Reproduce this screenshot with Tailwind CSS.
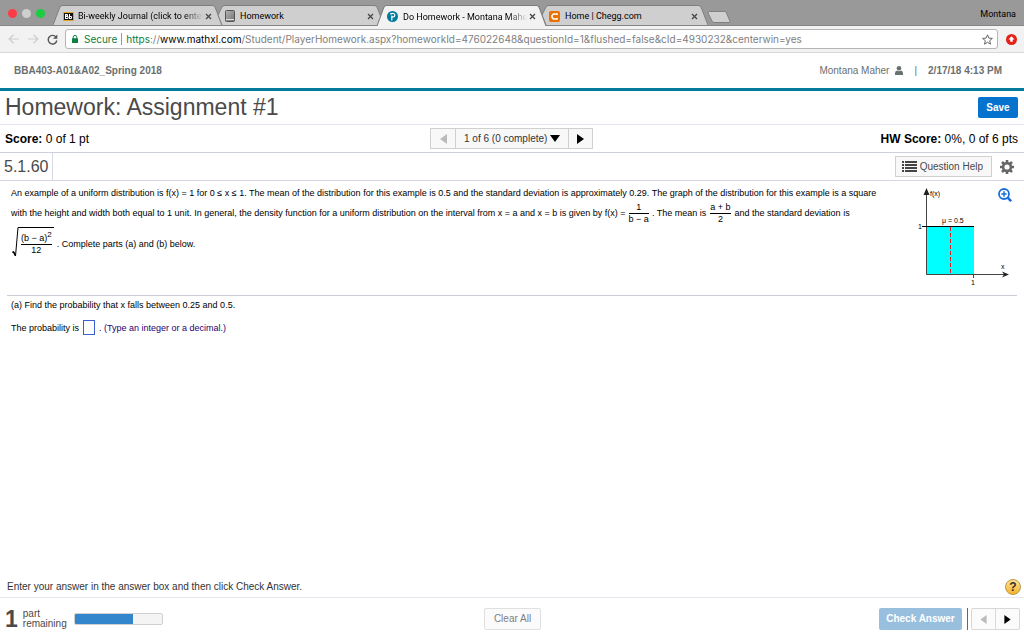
<!DOCTYPE html>
<html lang="en">
<head>
    <meta charset="UTF-8">
    <meta name="viewport" content="width=device-width, initial-scale=1.0">
    <title>Do Homework - Montana Maher</title>
    <script src="https://cdn.jsdelivr.net/npm/@tailwindcss/browser@4"></script>
</head>
<body class="flex flex-col min-h-screen bg-white text-black text-[10px] leading-[14px] font-['Liberation_Sans',Arial,sans-serif]">

    <!-- Tab strip -->
    <div class="flex items-end h-[26px] shrink-0 bg-[#999999] border-b border-[#858585] text-[9px] font-[Roboto,sans-serif]">
        <div class="flex items-center gap-[5px] self-center w-[53px] pl-2 pt-[2px] shrink-0">
            <span class="size-[9px] rounded-full bg-[#fc3b47]"></span>
            <span class="size-[9px] rounded-full bg-[#cfcfcf]"></span>
            <span class="size-[9px] rounded-full bg-[#19cf40]"></span>
        </div>
        <div class="relative flex items-center w-[169px] h-5 pt-[2px] pl-[10px] pr-[8px] shrink-0">
            <svg class="absolute inset-0 size-full" viewBox="0 0 170 20" preserveAspectRatio="none"><path d="M0 20 L7 2 Q8 .5 10 .5 H160 Q162 .5 163 2 L170 20" fill="#cfcfcf" stroke="#7d7d7d"/></svg>
            <svg class="relative w-[11px] h-[9px] shrink-0" viewBox="0 0 11 9"><rect width="11" height="9" fill="#e5a52d"/><rect x="1" y="1" width="9" height="7" fill="#111"/><path d="M2.500 2v5M2.500 2.500h2v1.500h-2M2.500 6.500h2.500V4.500H2.500M6.500 2v5M6.500 4.500h2v2h-2" stroke="#fff" fill="none"/></svg>
            <span class="relative flex-1 ml-[4px] whitespace-nowrap overflow-hidden mask-r-from-85%">Bi-weekly Journal (click to enter)</span>
            <button aria-label="Close tab" class="relative shrink-0 mx-[2px]"><svg class="size-[7px]" viewBox="0 0 7 7"><path d="M1 1l5 5M6 1l-5 5" stroke="#444" stroke-width="1.200"/></svg></button>
        </div>
        <div class="relative flex items-center w-[169px] h-5 pt-[2px] pl-[10px] pr-[8px] -ml-[7px] shrink-0">
            <svg class="absolute inset-0 size-full" viewBox="0 0 170 20" preserveAspectRatio="none"><path d="M3 10 L7 2 Q8 .5 10 .5 H160 Q162 .5 163 2 L170 20 H7 Z" fill="#cfcfcf"/><path d="M7 20 L3 10 L7 2 Q8 .5 10 .5 H160 Q162 .5 163 2 L170 20" fill="none" stroke="#7d7d7d"/></svg>
            <svg class="relative w-[10px] h-[12px] shrink-0" viewBox="0 0 10 12"><defs><linearGradient id="page" x2="1" y2="1"><stop stop-color="#b5b5b5"/><stop offset="1" stop-color="#707070"/></linearGradient></defs><rect x=".5" y=".5" width="9" height="11" rx="1" fill="url(#page)" stroke="#555"/><path d="M1 9.500h8" stroke="#ddd"/></svg>
            <span class="relative flex-1 ml-[5px] whitespace-nowrap overflow-hidden">Homework</span>
            <button aria-label="Close tab" class="relative shrink-0 mx-[2px]"><svg class="size-[7px]" viewBox="0 0 7 7"><path d="M1 1l5 5M6 1l-5 5" stroke="#444" stroke-width="1.200"/></svg></button>
        </div>
        <div class="relative z-10 flex items-center w-[169px] h-[21px] pt-[2px] pl-[10px] pr-[8px] -ml-[7px] -mb-px shrink-0">
            <svg class="absolute inset-0 size-full" viewBox="0 0 170 20" preserveAspectRatio="none"><path d="M0 20 L7 2 Q8 .5 10 .5 H160 Q162 .5 163 2 L170 20" fill="#f2f2f2" stroke="#7d7d7d"/></svg>
            <svg class="relative size-[11px] shrink-0" viewBox="0 0 11 11"><circle cx="5.500" cy="5.500" r="5.500" fill="#047a9c"/><path d="M4.800 9.500V4.500M3.300 3.300Q4.500 2.200 6 2.500A1.700 1.700 0 0 1 6.200 5.900H5" fill="none" stroke="#fff" stroke-width="1.200"/></svg>
            <span class="relative flex-1 ml-[5px] whitespace-nowrap overflow-hidden mask-r-from-85%">Do Homework - Montana Maher</span>
            <button aria-label="Close tab" class="relative shrink-0 mx-[2px]"><svg class="size-[7px]" viewBox="0 0 7 7"><path d="M1 1l5 5M6 1l-5 5" stroke="#444" stroke-width="1.200"/></svg></button>
        </div>
        <div class="relative flex items-center w-[169px] h-5 pt-[2px] pl-[10px] pr-[8px] -ml-[7px] shrink-0">
            <svg class="absolute inset-0 size-full" viewBox="0 0 170 20" preserveAspectRatio="none"><path d="M3 10 L7 2 Q8 .5 10 .5 H160 Q162 .5 163 2 L170 20 H7 Z" fill="#cfcfcf"/><path d="M7 20 L3 10 L7 2 Q8 .5 10 .5 H160 Q162 .5 163 2 L170 20" fill="none" stroke="#7d7d7d"/></svg>
            <svg class="relative size-[11px] shrink-0" viewBox="0 0 11 11"><rect width="11" height="11" rx="2" fill="#eb7100"/><path d="M8 4V3H4.500L3 4.500v2L4.500 8H8V7" fill="none" stroke="#fff" stroke-width="1.600"/></svg>
            <span class="relative flex-1 ml-[5px] whitespace-nowrap overflow-hidden">Home | Chegg.com</span>
            <button aria-label="Close tab" class="relative shrink-0 mx-[2px]"><svg class="size-[7px]" viewBox="0 0 7 7"><path d="M1 1l5 5M6 1l-5 5" stroke="#444" stroke-width="1.200"/></svg></button>
        </div>
        <button aria-label="New tab" class="self-center mt-2 -ml-px"><svg class="w-[24px] h-[12px]" viewBox="0 0 24 12"><path d="M2.500 .5H17.500Q19 .5 19.500 2L23 10.500Q23 11.500 22 11.500H7Q5.500 11.500 5 10L1 2Q1 .5 2.500 .5Z" fill="#cfcfcf" stroke="#808080"/></svg></button>
        <span class="ml-auto self-center mr-2 pt-[3px]">Montana</span>
    </div>

    <!-- Address bar -->
    <div class="flex items-center h-[27px] shrink-0 bg-[#f2f2f2] border-b border-[#d8d8d8] pl-2 pr-[7px]">
        <button aria-label="Back"><svg class="w-[11px] h-[10px]" viewBox="0 0 11 10" fill="none" stroke="#cdcdcd" stroke-width="1.200"><path d="M5.500 .8L1.200 5l4.300 4.200M1.200 5H11"/></svg></button>
        <button aria-label="Forward" class="ml-[9px]"><svg class="w-[11px] h-[10px]" viewBox="0 0 11 10" fill="none" stroke="#cdcdcd" stroke-width="1.200"><path d="M5.500 .8L9.800 5 5.500 9.200M9.800 5H0"/></svg></button>
        <button aria-label="Reload" class="ml-[8px]"><svg class="size-[11px]" viewBox="0 0 11 11"><path d="M9 3.100A4.300 4.300 0 1 0 9.800 6.500" fill="none" stroke="#555" stroke-width="1.400"/><path d="M10.300 .5v4.300H6z" fill="#555"/></svg></button>
        <div class="flex flex-1 items-center h-[20px] ml-[7px] pl-[6px] pr-[4px] bg-white border border-[#b5b5b5] rounded-[3px] font-[Inter,sans-serif]">
            <svg class="w-[6px] h-[8px]" viewBox="0 0 6 8"><rect y="3.300" width="6" height="4.700" rx=".5" fill="#0b8043"/><path d="M1.200 4V2.200a1.800 1.800 0 0 1 3.600 0V4" fill="none" stroke="#0b8043"/></svg>
            <span class="ml-[6px] pr-[4px] border-r border-[#999] leading-[12px] text-[#0b8043]">Secure</span>
            <div role="textbox" aria-label="Address" contenteditable="true" class="flex-1 ml-[4px] whitespace-nowrap text-[#808080]"><span class="text-[#0b8043]">https</span>://<span class="text-black">www.mathxl.com</span>/Student/PlayerHomework.aspx?homeworkId=476022648&amp;questionId=1&amp;flushed=false&amp;cId=4930232&amp;centerwin=yes</div>
            <button aria-label="Bookmark this page"><svg class="size-[11px]" viewBox="0 0 11 11"><path d="M5.500 .8l1.400 3.300 3.500.3-2.700 2.300.8 3.500-3-1.900-3 1.900.8-3.500L.6 4.400l3.500-.3z" fill="none" stroke="#666"/></svg></button>
        </div>
        <button aria-label="Update" class="ml-[8px]"><svg class="size-[11px]" viewBox="0 0 11 11"><circle cx="5.500" cy="5.500" r="5.500" fill="#e2231a"/><path d="M5.500 2.300l3 3.200H6.700v2.300H4.300V5.500H2.500z" fill="#fff"/></svg></button>
    </div>

    <!-- Course header -->
    <header class="flex items-center justify-between h-[38px] shrink-0 pl-[14px] pr-[22px] border-b-3 border-[#047a9c] text-[#6a7070]">
        <span class="font-bold">BBA403-A01&amp;A02_Spring 2018</span>
        <div class="flex items-center">
            <span>Montana Maher</span>
            <svg class="w-[8px] h-[9px] ml-[6px]" viewBox="0 0 8 9" fill="#6a7070"><circle cx="4" cy="2.300" r="2.300"/><path d="M0 9V7.200Q0 5.200 2 4.500Q4 6 6 4.500Q8 5.200 8 7.200V9z"/></svg>
            <span class="mx-[11px]">|</span>
            <span class="font-bold">2/17/18 4:13 PM</span>
        </div>
    </header>

    <!-- Assignment title -->
    <div class="flex items-center justify-between h-[34px] shrink-0 pl-[5px] pr-[6px] border-b border-[#e3e4ee]">
        <h1 class="text-[23px] leading-[30px] pb-[2px] text-[#4a4a4a]">Homework: Assignment #1</h1>
        <button class="h-[21px] w-[40px] rounded-[2px] bg-[#0573ce] text-white font-bold">Save</button>
    </div>

    <!-- Score and question picker -->
    <div class="grid grid-cols-[1fr_auto_1fr] items-center h-[28px] shrink-0 pl-[5px] pr-[6px] border-b border-[#ccd0dc] text-[12px]">
        <div><b>Score:</b> 0 of 1 pt</div>
        <div class="flex h-[21px] border border-[#d0d0d0] bg-[#f8f8f8] text-[10px]">
            <button aria-label="Previous question" class="flex items-center justify-center w-6"><svg class="w-[7px] h-[10px]" viewBox="0 0 7 10"><path d="M7 0v10L0 5z" fill="#bbb"/></svg></button>
            <div class="relative flex items-center border-x border-[#d0d0d0]">
                <select aria-label="Question" class="appearance-none w-[112px] h-full pl-[8px] text-[#333]">
                    <option>1 of 6 (0 complete)</option>
                </select>
                <svg class="absolute right-[8px] w-[10px] h-[7px] pointer-events-none" viewBox="0 0 10 7"><path d="M0 0h10L5 7z"/></svg>
            </div>
            <button aria-label="Next question" class="flex items-center justify-center w-[23px]"><svg class="w-[7px] h-[10px]" viewBox="0 0 7 10"><path d="M0 0v10l7-5z"/></svg></button>
        </div>
        <div class="text-right"><b>HW Score:</b> 0%, 0 of 6 pts</div>
    </div>

    <!-- Question number -->
    <div class="flex items-center h-[28px] shrink-0 pl-[4px] pr-[10px] border-b border-[#d5d8e2]">
        <h2 class="flex items-center self-stretch pr-[4px] border-r border-[#d5d8e2] text-[16px] text-[#4a4a4a]">5.1.60</h2>
        <button class="flex items-center h-[21px] ml-auto pl-[6px] pr-[8px] gap-[3px] border border-[#d0d0d0] bg-[#f8f8f8] text-[#4a4a4a]">
            <svg class="w-[15px] h-[11px]" viewBox="0 0 15 11" fill="#444"><path d="M0 0h2v2H0zM0 3h2v2H0zM0 6h2v2H0zM0 9h2v2H0zM3 0h12v2H3zM3 3h12v2H3zM3 6h12v2H3zM3 9h12v2H3z"/></svg>
            Question Help
        </button>
        <button aria-label="Settings" class="ml-[8px]"><svg class="size-[14px]" viewBox="0 0 14 14"><circle cx="7" cy="7" r="3.900" fill="none" stroke="#666" stroke-width="2.600"/><path d="M7 0v3M7 11v3M0 7h3M11 7h3M2 2l2.200 2.200M9.800 9.800L12 12M12 2L9.800 4.200M4.200 9.800L2 12" stroke="#666" stroke-width="2.600"/></svg></button>
    </div>

    <!-- Question -->
    <main class="flex-1 px-[7px] text-[9px]">
        <div class="relative flex h-[115px] pl-[4px] border-b border-[#ccccd8]">
            <div class="flex-1 pt-[4px] whitespace-nowrap">
                <div class="flex items-center h-4">An example of a uniform distribution is f(x) = 1 for 0 ≤ x ≤ 1. The mean of the distribution for this example is 0.5 and the standard deviation is approximately 0.29. The graph of the distribution for this example is a square</div>
                <div class="flex items-center h-6">
                    <span>with the height and width both equal to 1 unit. In general, the density function for a uniform distribution on the interval from x = a and x = b is given by f(x) =</span>
                    <span class="flex flex-col items-center mx-[3px] leading-[11px]"><span>1</span><span class="border-t border-black">b − a</span></span>
                    <span>. The mean is</span>
                    <span class="flex flex-col items-center mx-[4px] leading-[11px]"><span>a + b</span><span class="self-stretch text-center border-t border-black">2</span></span>
                    <span>and the standard deviation is</span>
                </div>
                <div class="flex items-center h-[38px]">
                    <svg class="w-[8px] h-[34px]" viewBox="0 0 8 34"><path d="M1 25.500L2.500 24.500L4.500 29L7 .5H8" fill="none" stroke="#000"/><path d="M2.300 24.500L4.300 28.500" stroke="#000" stroke-width="1.500"/></svg>
                    <span class="flex flex-col items-center h-[34px] px-[2px] border-t border-black leading-[11px]"><span class="pt-[5px]">(b − a)<sup class="text-[8px] leading-none">2</sup></span><span class="self-stretch text-center border-t border-black">12</span></span>
                    <span class="ml-[3px]">. Complete parts (a) and (b) below.</span>
                </div>
            </div>
            <svg class="w-[100px] h-[110px] shrink-0" viewBox="0 0 100 110" font-family="Liberation Sans" font-size="7">
                <rect x="9" y="46" width="48" height="48" fill="#00ffff"/>
                <path d="M9.500 12V93.500H89" fill="none" stroke="#444"/>
                <path d="M9.500 7L12.500 14H6.500zM92 93.500L85 90.500L87 93.500L85 96.500z" fill="#222"/>
                <path d="M5 45.500H57" stroke="#000"/>
                <path d="M56.500 93v4" stroke="#444"/>
                <path d="M33.500 46V94" stroke="#e02020" stroke-dasharray="4 2"/>
                <text x="13" y="15">f(x)</text>
                <text x="25" y="42">μ = 0.5</text>
                <text x="1" y="48">1</text>
                <text x="54" y="104">1</text>
                <text x="84" y="88">x</text>
            </svg>
            <button aria-label="Enlarge graph" class="absolute top-[7px] right-[5px]"><svg class="size-[14px]" viewBox="0 0 14 14" fill="none" stroke="#1a6fdc"><circle cx="6" cy="6" r="5" stroke-width="1.800"/><path d="M9.600 9.600L13.200 13.200" stroke-width="2.600"/><path d="M3.300 6h5.400M6 3.300v5.400" stroke-width="1.500"/></svg></button>
        </div>
        <div class="pl-[4px] pt-[2px]">(a) Find the probability that x falls between 0.25 and 0.5.</div>
        <div class="flex items-center pl-[4px] mt-[8px]">
            <label for="answer">The probability is</label>
            <input id="answer" type="text" class="w-[12px] h-[15px] mx-[4px] border border-[#3b5fd0]">
            <span>. <span class="text-[#1f0070]">(Type an integer or a decimal.)</span></span>
        </div>
    </main>

    <!-- Instructions -->
    <div class="flex items-center justify-between h-[21px] shrink-0 pl-[7px] pr-[3px] border-b border-[#e6e7ee] text-[#333]">
        <span>Enter your answer in the answer box and then click Check Answer.</span>
        <button aria-label="Help" class="size-4 rounded-full border border-[#b99a45] bg-linear-to-b from-[#ffe28a] to-[#f5b325] font-bold text-[12px] leading-[14px]">?</button>
    </div>

    <!-- Footer -->
    <footer class="grid grid-cols-[1fr_auto_1fr] items-center h-[42px] shrink-0 pl-[5px] pr-[4px] text-[#4a4a4a]">
        <div class="flex items-center">
            <span class="text-[23px] font-bold">1</span>
            <span class="ml-[5px] leading-[10px]">part<br>remaining</span>
            <div class="w-[89px] h-[12px] ml-[7px] rounded-[2px] border border-[#d0d0d0] bg-[#f4f4f4] overflow-hidden">
                <div class="h-full bg-[#3385cc]" style="width: 67%"></div>
            </div>
        </div>
        <button class="h-[22px] w-[57px] rounded-[2px] border border-[#e0e0e0] bg-[#fbfbfb] text-[#808080]">Clear All</button>
        <div class="flex items-center justify-end">
            <button class="h-[22px] w-[83px] rounded-[2px] bg-[#98c0de] text-white font-bold">Check Answer</button>
            <span class="w-px h-[22px] ml-[5px] mr-[3px] bg-[#666]"></span>
            <div class="flex h-[22px] border border-[#d8d8d8] rounded-[2px] bg-[#fbfbfb]">
                <button aria-label="Previous" class="flex items-center justify-center w-6 border-r border-[#d8d8d8]"><svg class="w-[7px] h-[9px]" viewBox="0 0 7 10"><path d="M7 0v10L0 5z" fill="#bbb"/></svg></button>
                <button aria-label="Next" class="flex items-center justify-center w-[23px]"><svg class="w-[7px] h-[9px]" viewBox="0 0 7 10"><path d="M0 0v10l7-5z"/></svg></button>
            </div>
        </div>
    </footer>
</body>
</html>
